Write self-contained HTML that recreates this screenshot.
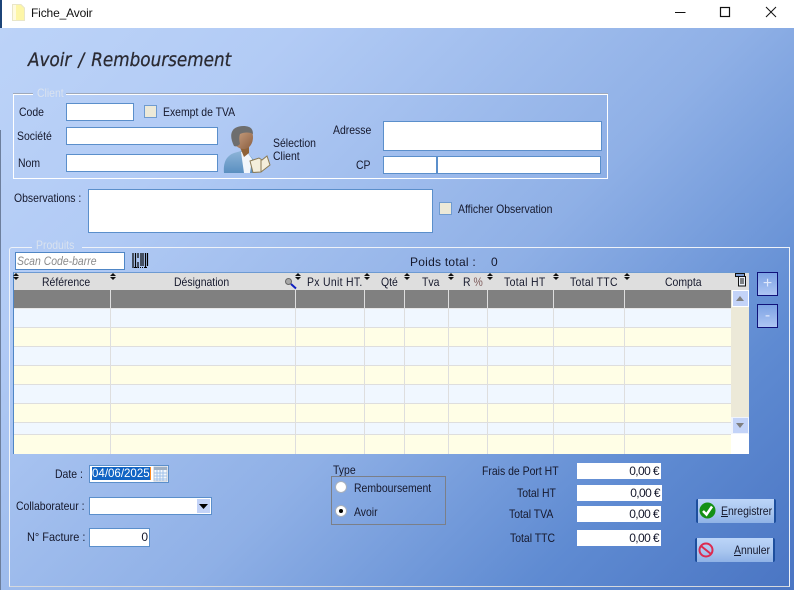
<!DOCTYPE html>
<html lang="fr"><head><meta charset="utf-8"><title>Fiche_Avoir</title>
<style>
*{box-sizing:border-box}
html,body{margin:0;padding:0;width:794px;height:590px;overflow:hidden;background:#fff}
body{position:relative;font-family:"Liberation Sans",sans-serif;font-size:12px;color:#15182c}
.a{position:absolute}
.t{position:absolute;white-space:nowrap;line-height:14px;transform:scaleX(.87);transform-origin:0 50%}
.i{position:absolute;background:#fff;border:1px solid #5b8fcb}
.c{position:absolute;width:13px;height:13px;background:#ece9d8;border:1px solid #6f9bd0}
.g{position:absolute;background:#808080}
.h{position:absolute;top:275px;white-space:nowrap;line-height:14px;color:#15182c;transform:scaleX(.87);transform-origin:0 50%}
.r{position:absolute;left:14px;width:717px}
.v{position:absolute;top:290px;height:164px;width:1px;background:#dedede}
.s{position:absolute;top:273px;width:6px;height:8px}
.s:before,.s:after{content:"";position:absolute;left:0;border-left:3px solid transparent;border-right:3px solid transparent}
.s:before{top:0;border-bottom:3px solid #111}
.s:after{top:4px;border-top:3px solid #111}
.m{position:absolute;left:577px;width:84px;height:16px;background:#fff;text-align:right;padding-right:2px;line-height:16px;color:#15182c;letter-spacing:-.6px}
.b{position:absolute;width:80px;height:24px;background:linear-gradient(#bcd5f8,#a9c6ef 55%,#8fb2e6);border-left:2px solid #1d4f9e;border-right:2px solid #1d4f9e;border-radius:2px}
.p{position:absolute;left:757px;width:21px;height:24px;background:linear-gradient(#7da3e4,#adc5f3);border:1px solid #10127a;color:#dfe8fb;text-align:center;font-size:16px;line-height:21px}
</style></head><body>
<div class="a" style="left:0;top:28px;width:794px;height:562px;background:linear-gradient(135deg,#bcd3f8 0%,#b2cbf5 22%,#8fb0e6 55%,#5f8bd2 80%,#4a75c3 100%)"></div>
<div class="a" style="left:0;top:0;width:2px;height:28px;background:#1c4478"></div>
<div class="a" style="left:0;top:130px;width:1px;height:460px;background:#6d7f9d"></div>

<!-- title bar -->
<svg class="a" style="left:12px;top:4px" width="13" height="17" viewBox="0 0 13 17"><path d="M0.500 0.500H9L12.500 4V16.500H0.500Z" fill="#fdf6a8" stroke="#e9e6c8"/><path d="M1 1H4V16H1Z" fill="#fffbe0"/></svg>
<div class="t" style="left:31px;top:6px;color:#111;transform:none;letter-spacing:-.15px">Fiche_Avoir</div>
<svg class="a" style="left:670px;top:0" width="124" height="28" viewBox="0 0 124 28" fill="none" stroke="#111"><path d="M5 12.500H15.500"/><rect x="50.500" y="7.500" width="9" height="9" stroke-width="1.200"/><path d="M96 7L106 17M106 7L96 17"/></svg>

<div class="t" style="left:28px;top:50px;font:italic 19px/20px 'DejaVu Sans',sans-serif;color:#2b2b33;transform:scaleX(.885);-webkit-text-stroke:.3px #2b2b33;word-spacing:2px">Avoir / Remboursement</div>

<!-- client group -->
<div class="a" style="left:13px;top:94px;width:595px;height:85px;border:1px solid #fff"></div>
<div class="a" style="left:13px;top:93px;width:595px;height:1px;background:#9fa9ba"></div>
<div class="a" style="left:33px;top:90px;width:33px;height:8px;background:#b7cff7"></div>
<div class="t" style="left:37px;top:86px;color:#d9e2ef">Client</div>

<div class="t" style="left:19px;top:105px">Code</div>
<div class="i" style="left:66px;top:103px;width:68px;height:18px"></div>
<div class="c" style="left:144px;top:105px"></div>
<div class="t" style="left:163px;top:105px">Exempt de TVA</div>
<div class="t" style="left:17px;top:129px">Société</div>
<div class="i" style="left:66px;top:127px;width:152px;height:18px"></div>
<div class="t" style="left:18px;top:156px">Nom</div>
<div class="i" style="left:66px;top:154px;width:152px;height:18px"></div>

<svg class="a" style="left:223px;top:125px" width="50" height="50" viewBox="0 0 50 50">
<defs><linearGradient id="sk" x1="0" y1="0" x2="1" y2="1"><stop offset="0" stop-color="#d8b090"/><stop offset="1" stop-color="#8a5e40"/></linearGradient>
<linearGradient id="sh" x1="0" y1="0" x2="0" y2="1"><stop offset="0" stop-color="#8db4d8"/><stop offset="1" stop-color="#5a8fc0"/></linearGradient></defs>
<path d="M1 48C0 38 3 31 11 28L18 26L25 28L30 34L30 48Z" fill="url(#sh)"/>
<path d="M18 27L24 27L29 34L27 48H21Z" fill="#f2f6fb"/>
<path d="M16 20H26V28L21 32Z" fill="#8f6238"/>
<path d="M9 12C9 5 14 2 20 2C26 2 30 6 30 12C30 19 26 24 21 24C15 24 9 19 9 12Z" fill="url(#sk)"/>
<path d="M11 21C8 15 7 9 10 5C13 1 21 0 26 2C29 3 30 6 30 9C27 7 21 7 17 9C16 12 16 15 17 19C15 21 13 22 11 21Z" fill="#6e6e6e"/>
<path d="M27 36L36 33L39 35L44 31L47 40L38 47L30 47.500Z" fill="#f4eedb" stroke="#8a7a55" stroke-width="1"/>
<path d="M38 35L38 47" stroke="#8a7a55"/>
</svg>
<div class="t" style="left:273px;top:136px">Sélection</div>
<div class="t" style="left:273px;top:149px">Client</div>

<div class="t" style="left:333px;top:123px">Adresse</div>
<div class="i" style="left:383px;top:121px;width:219px;height:30px"></div>
<div class="t" style="left:356px;top:158px">CP</div>
<div class="i" style="left:383px;top:156px;width:54px;height:18px"></div>
<div class="i" style="left:437px;top:156px;width:164px;height:18px"></div>

<div class="t" style="left:14px;top:191px">Observations :</div>
<div class="i" style="left:88px;top:189px;width:345px;height:44px"></div>
<div class="c" style="left:439px;top:202px"></div>
<div class="t" style="left:458px;top:202px">Afficher Observation</div>

<!-- produits group -->
<div class="a" style="left:9px;top:247px;width:781px;height:340px;border:1px solid #eef2f8;border-bottom-color:#d4d8de;border-radius:3px 0 0 0"></div>
<div class="a" style="left:32px;top:243px;width:50px;height:8px;background:#b2cbf5"></div>
<div class="t" style="left:36px;top:238px;color:#d9e2ef">Produits</div>
<div class="i" style="left:15px;top:252px;width:110px;height:18px;border-color:#4f86c6"></div>
<div class="t" style="left:17px;top:254px;font-style:italic;color:#8a8a8a">Scan Code-barre</div>
<svg class="a" style="left:132px;top:252px" width="17" height="17" viewBox="0 0 17 17"><path d="M1 1V16M3.500 1V16M6 1V6M6 10V16M9 1V14M11 1V14M13.500 1V16M15.500 1V14" stroke="#000" stroke-width="1.200"/><path d="M2 15.500H15" stroke="#000" stroke-dasharray="1 1"/></svg>
<div class="t" style="left:410px;top:255px;letter-spacing:.25px;transform:none">Poids total :</div>
<div class="t" style="left:491px;top:255px;transform:none">0</div>

<!-- grid -->
<div class="a" style="left:13px;top:272px;width:736px;height:182px;background:#fff;border-left:1px solid #4f86c6;border-top:1px solid #6d9ad2"></div>
<div class="a" style="left:14px;top:273px;width:735px;height:17px;background:#dedede"></div>
<div class="g" style="left:14px;top:290px;width:717px;height:18px"></div>
<div class="r" style="top:308px;height:19px;background:#f0f7ff"></div>
<div class="r" style="top:327px;height:19px;background:#fffee6"></div>
<div class="r" style="top:346px;height:19px;background:#f0f7ff"></div>
<div class="r" style="top:365px;height:19px;background:#fffee6"></div>
<div class="r" style="top:384px;height:19px;background:#f0f7ff"></div>
<div class="r" style="top:403px;height:19px;background:#fffee6"></div>
<div class="r" style="top:422px;height:12px;background:#f0f7ff"></div>
<div class="r" style="top:434px;height:20px;background:#fffee6"></div>
<div class="r" style="top:308px;height:1px;background:#e8e8e8"></div>
<div class="r" style="top:327px;height:1px;background:#dedede"></div>
<div class="r" style="top:346px;height:1px;background:#dedede"></div>
<div class="r" style="top:365px;height:1px;background:#dedede"></div>
<div class="r" style="top:384px;height:1px;background:#dedede"></div>
<div class="r" style="top:403px;height:1px;background:#dedede"></div>
<div class="r" style="top:422px;height:1px;background:#dedede"></div>
<div class="r" style="top:434px;height:1px;background:#dedede"></div>
<div class="v" style="left:110px"></div><div class="v" style="left:295px"></div><div class="v" style="left:364px"></div><div class="v" style="left:404px"></div><div class="v" style="left:448px"></div><div class="v" style="left:487px"></div><div class="v" style="left:553px"></div><div class="v" style="left:624px"></div>

<div class="h" style="left:42px">Référence</div>
<div class="h" style="left:174px">Désignation</div>
<div class="h" style="left:307px;letter-spacing:.35px">Px Unit HT.</div>
<div class="h" style="left:381px">Qté</div>
<div class="h" style="left:422px">Tva</div>
<div class="h" style="left:463px">R <span style="color:#7d5a5a">%</span></div>
<div class="h" style="left:504px;letter-spacing:.4px">Total HT</div>
<div class="h" style="left:570px;letter-spacing:.35px">Total TTC</div>
<div class="h" style="left:665px">Compta</div>
<div class="s" style="left:13px"></div><div class="s" style="left:110px"></div><div class="s" style="left:295px"></div><div class="s" style="left:364px"></div><div class="s" style="left:404px"></div><div class="s" style="left:448px"></div><div class="s" style="left:487px"></div><div class="s" style="left:553px"></div><div class="s" style="left:624px"></div>
<svg class="a" style="left:285px;top:278px" width="12" height="12" viewBox="0 0 12 12"><circle cx="3.500" cy="3.500" r="3" fill="#a8a8a8" stroke="#666"/><path d="M6 6L11 10.500" stroke="#1020c0" stroke-width="2"/></svg>
<svg class="a" style="left:735px;top:273px" width="12" height="14" viewBox="0 0 12 14" fill="#e8eef8" stroke="#111"><rect x="0.500" y="0.500" width="9" height="3" fill="#7a9ad0"/><rect x="3.500" y="3.500" width="7" height="9.500"/><path d="M5 6H9M5 8H9M5 10H9"/></svg>

<!-- scrollbar -->
<div class="a" style="left:731px;top:290px;width:18px;height:144px;background:#ece9d8"></div>
<div class="a" style="left:732px;top:290px;width:17px;height:17px;background:#c3d3f8;border:1px solid #fff"></div>
<svg class="a" style="left:736px;top:296px" width="8" height="5"><path d="M4 0L8 5H0Z" fill="#7f7f7f"/></svg>
<div class="a" style="left:731px;top:417px;width:18px;height:17px;background:#f0f4fc"></div>
<div class="a" style="left:733px;top:418px;width:15px;height:15px;background:#c3d3f8"></div>
<svg class="a" style="left:736px;top:423px" width="8" height="5"><path d="M0 0H8L4 5Z" fill="#7f7f7f"/></svg>
<div class="a" style="left:731px;top:434px;width:18px;height:20px;background:#fff"></div>

<div class="p" style="top:272px">+</div>
<div class="p" style="top:304px">-</div>

<!-- bottom left -->
<div class="t" style="left:55px;top:467px">Date :</div>
<div class="i" style="left:89px;top:465px;width:80px;height:18px"></div>
<div class="a" style="left:92px;top:467px;width:59px;height:13px;background:#1164c4;border-right:1px solid #ff8a1e"></div>
<div class="t" style="left:92px;top:466px;color:#fff;transform:scaleX(.96)">04/06/2025</div>
<svg class="a" style="left:153px;top:466px" width="15" height="16" viewBox="0 0 15 16"><rect x="1" y="1" width="13" height="14" fill="#f4f7fb" stroke="#b9c3d0"/><rect x="1" y="1" width="13" height="3" fill="#9fb0c4"/><path d="M1 7H14M1 10H14M1 13H14M4 4V15M7 4V15M10 4V15" stroke="#9ec0ea"/></svg>
<div class="t" style="left:16px;top:499px">Collaborateur :</div>
<div class="i" style="left:89px;top:497px;width:123px;height:18px"></div>
<div class="a" style="left:197px;top:499px;width:13px;height:14px;background:#c3d3f8"></div>
<svg class="a" style="left:199px;top:504px" width="9" height="5"><path d="M0 0H9L4.500 5Z" fill="#000"/></svg>
<div class="t" style="left:27px;top:530px;transform:scaleX(.91)">N° Facture :</div>
<div class="i" style="left:89px;top:528px;width:61px;height:19px;text-align:right;padding-right:1px;line-height:17px">0</div>

<!-- type -->
<div class="t" style="left:333px;top:463px">Type</div>
<div class="a" style="left:331px;top:476px;width:115px;height:49px;border:1px solid #7b7f88"></div>
<div class="a" style="left:335px;top:481px;width:12px;height:12px;border-radius:50%;background:#fff;border:1px solid #a8b0bc"></div>
<div class="t" style="left:354px;top:481px">Remboursement</div>
<div class="a" style="left:335px;top:505px;width:12px;height:12px;border-radius:50%;background:#fff;border:1px solid #a8b0bc"></div>
<div class="a" style="left:339px;top:509px;width:4px;height:4px;border-radius:50%;background:#000"></div>
<div class="t" style="left:354px;top:505px">Avoir</div>

<!-- totals -->
<div class="t" style="left:482px;top:464px">Frais de Port HT</div>
<div class="m" style="top:463px">0,00 €</div>
<div class="t" style="left:517px;top:486px">Total HT</div>
<div class="m" style="top:485px;width:85px">0,00 €</div>
<div class="t" style="left:509px;top:507px">Total TVA</div>
<div class="m" style="top:506px">0,00 €</div>
<div class="t" style="left:510px;top:531px">Total TTC</div>
<div class="m" style="top:530px">0,00 €</div>

<!-- buttons -->
<div class="b" style="left:696px;top:499px"></div>
<svg class="a" style="left:699px;top:502px" width="17" height="17" viewBox="0 0 17 17"><circle cx="8.500" cy="8.500" r="8" fill="#149014"/><path d="M4 9L7.500 12.500L13 4.500" fill="none" stroke="#fff" stroke-width="2.500"/></svg>
<div class="t" style="left:721px;top:504px"><u>E</u>nregistrer</div>
<div class="b" style="left:695px;top:538px"></div>
<svg class="a" style="left:698px;top:542px" width="16" height="16" viewBox="0 0 16 16" fill="none" stroke="#dc2b50" stroke-width="2"><circle cx="8" cy="8" r="6.500"/><path d="M3 4L13 12"/></svg>
<div class="t" style="left:734px;top:543px"><u>A</u>nnuler</div>
</body></html>
